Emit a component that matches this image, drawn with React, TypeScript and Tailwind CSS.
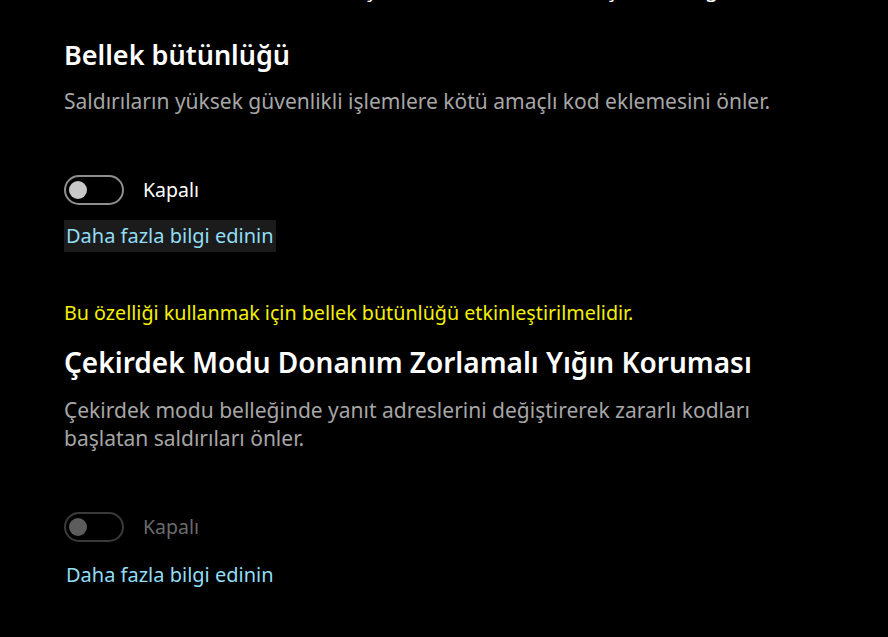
import React from 'react'

const Toggle = ({ disabled }: { disabled?: boolean }) => (
  <div
    className={
      'flex h-[30px] w-[60px] items-center rounded-full border-2 px-[3px] ' +
      (disabled ? 'border-[#3a3a3a]' : 'border-[#8f8f8f]')
    }
  >
    <div className={'h-[18px] w-[18px] rounded-full ' + (disabled ? 'bg-[#5c5c5c]' : 'bg-[#c8c8c8]')} />
  </div>
)

export default function App() {
  return (
    <div className="flex h-[637px] w-[888px] flex-col items-start overflow-hidden bg-black pl-[64px] font-['Noto_Sans',sans-serif]">
      {/* üstte kesilen önceki satır */}
      <div className="-mt-[26px] h-[28px] whitespace-nowrap text-[22px] leading-[28px] text-white">
        <span className="ml-[200px]">Kötü amaçlı kodlardan korumak için ek bir güvenlik katmanı</span>
      </div>

      <h2 className="mt-[35px] text-[27px] font-semibold leading-[36px] text-white">Bellek bütünlüğü</h2>
      <p className="mt-[14px] text-[21px] leading-[28px] text-[#a6a6a6]">
        Saldırıların yüksek güvenlikli işlemlere kötü amaçlı kod eklemesini önler.
      </p>

      <div className="mt-[60px] flex items-center gap-[19px]">
        <Toggle />
        <span className="text-[19.5px] leading-[28px] text-white">Kapalı</span>
      </div>

      <div className="mt-[15px] bg-[#1b1b1b] px-[2px] py-[2px]">
        <a className="block text-[20px] leading-[28px] text-[#92def5]">Daha fazla bilgi edinin</a>
      </div>

      <p className="mt-[48px] text-[19.7px] leading-[26px] text-[#f5f000]">
        Bu özelliği kullanmak için bellek bütünlüğü etkinleştirilmelidir.
      </p>

      <h2 className="mt-[18px] text-[28px] font-semibold leading-[36px] text-white">
        Çekirdek Modu Donanım Zorlamalı Yığın Koruması
      </h2>
      <p className="mt-[16px] w-[740px] text-[21px] leading-[28px] text-[#a6a6a6]">
        Çekirdek modu belleğinde yanıt adreslerini değiştirerek zararlı kodları başlatan saldırıları önler.
      </p>

      <div className="mt-[60px] flex items-center gap-[19px]">
        <Toggle disabled />
        <span className="text-[19.5px] leading-[28px] text-[#6b6b6b]">Kapalı</span>
      </div>

      <a className="mt-[19px] block px-[2px] text-[20px] leading-[28px] text-[#92def5]">Daha fazla bilgi edinin</a>
    </div>
  )
}
